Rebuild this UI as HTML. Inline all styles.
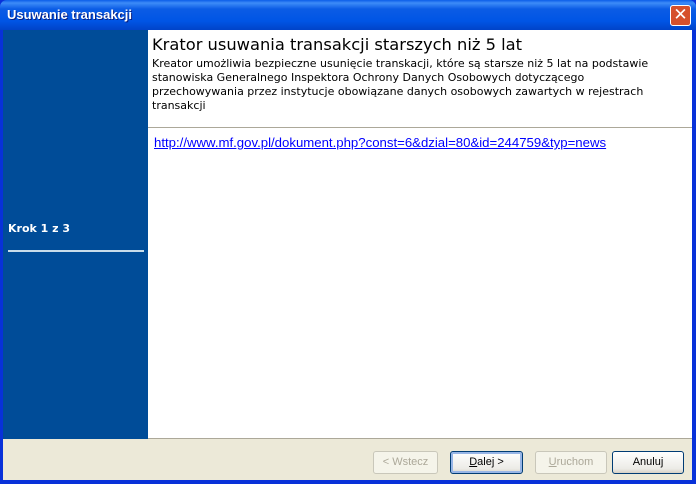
<!DOCTYPE html>
<html><head><meta charset="utf-8"><style>
*{margin:0;padding:0;box-sizing:border-box}
body{width:696px;height:484px;overflow:hidden;background:#0831d9;font-family:"DejaVu Sans","Liberation Sans",sans-serif;font-size:11px;position:relative}
#title{position:absolute;left:0;top:0;width:696px;height:30px;background:linear-gradient(#0a5de8 0%,#3d8cf7 10%,#0b5ce5 30%,#0055e5 70%,#0043c8 100%);border-radius:7px 7px 0 0}
#title span{position:absolute;left:7px;top:7px;color:#fff;font-weight:bold;font-size:13px;font-family:"Liberation Sans",sans-serif;text-shadow:1px 1px #0a1f80}
#close{position:absolute;left:670px;top:5px;width:21px;height:21px;border:1px solid #fff;border-radius:3px;background:#d6502c;color:#fff;text-align:center;font-size:17px;line-height:18px;font-weight:bold}
#frame{position:absolute;left:3px;top:30px;width:689px;height:450px;background:#ece9d8}
#left{position:absolute;left:0;top:0;width:145px;height:409px;background:#004c98}
#krok{position:absolute;left:5px;top:192px;color:#fff;font-weight:bold;font-size:11px}
#line{position:absolute;left:5px;top:220px;width:136px;height:2px;background:#c8dcea}
#right{position:absolute;left:145px;top:0;width:544px;height:409px;background:#fff;border-bottom:1px solid #aca899}
#hdr{position:absolute;left:0;top:0;width:544px;height:98px;border-bottom:1px solid #aca899}
h1{position:absolute;left:4px;top:5px;font-weight:normal;font-size:16.3px;color:#000;white-space:nowrap}
#desc{position:absolute;left:4px;top:27px;width:540px;line-height:14px;color:#000;font-size:11px;white-space:nowrap}
a{position:absolute;left:6px;top:105px;color:#0000ff;font-size:13.2px;text-decoration:underline;font-family:"Liberation Sans",sans-serif}
.b{position:absolute;top:421px;height:23px;border:1px solid #003c74;border-radius:3px;background:linear-gradient(#fff,#ecebe6 80%,#d6d0c5);text-align:center;line-height:21px;font-size:11px;color:#000;font-family:"Liberation Sans",sans-serif}
.d{border-color:#c9c7ba;color:#aca899;background:#f5f4ea}
.def{box-shadow:inset 0 0 0 2px #97b5e6}
</style></head><body>
<div id="title"><span>Usuwanie transakcji</span><div id="close">✕</div></div>
<div id="frame">
<div id="left"><div id="krok">Krok 1 z 3</div><div id="line"></div></div>
<div id="right">
<div id="hdr"><h1>Krator usuwania transakcji starszych niż 5 lat</h1>
<div id="desc">Kreator umożliwia bezpieczne usunięcie transkacji, które są starsze niż 5 lat na podstawie<br>stanowiska Generalnego Inspektora Ochrony Danych Osobowych dotyczącego<br>przechowywania przez instytucje obowiązane danych osobowych zawartych w rejestrach<br>transakcji</div></div>
<a>http://www.mf.gov.pl/dokument.php?const=6&amp;dzial=80&amp;id=244759&amp;typ=news</a>
</div>
<div class="b d" style="left:370px;width:65px">&lt; Wstecz</div>
<div class="b def" style="left:447px;width:73px"><u>D</u>alej &gt;</div>
<div class="b d" style="left:532px;width:72px"><u>U</u>ruchom</div>
<div class="b" style="left:609px;width:72px">Anuluj</div>
</div>
</body></html>
